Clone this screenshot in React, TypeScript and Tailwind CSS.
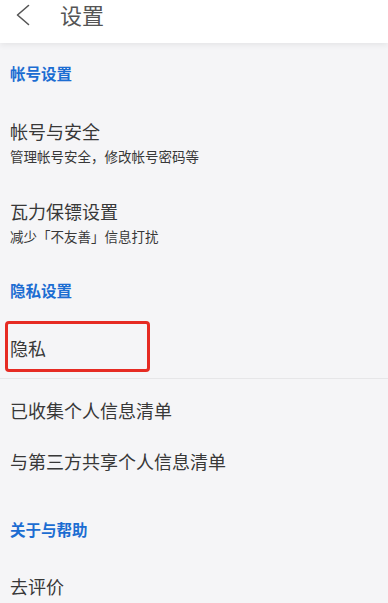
import React from 'react';

const font = { fontFamily: '"Noto Sans CJK SC", "Noto Sans", sans-serif' };

const SectionTitle: React.FC<{ title: string; className: string }> = ({ title, className }) => (
  <div className={`flex items-center px-[10px] ${className}`}>
    <span className="text-[15.5px] leading-[18px] font-bold text-[#1c6dd2]">{title}</span>
  </div>
);

const Row: React.FC<{ title: string; sub?: string; className: string; children?: React.ReactNode }> = ({
  title,
  sub,
  className,
  children,
}) => (
  <div className={`relative flex flex-col justify-center px-[10px] ${className}`}>
    <span className="text-[18px] leading-[22px] text-[#383838]">{title}</span>
    {sub && <span className="text-[13.5px] leading-[16px] mt-[6px] text-[#383838]">{sub}</span>}
    {children}
  </div>
);

const App: React.FC = () => {
  return (
    <div className="w-[388px] h-[603px] overflow-hidden bg-[#f5f5f7]" style={font}>
      <header className="relative z-10 h-[43px] bg-white shadow-[0_2px_6px_rgba(0,0,0,0.07)] flex items-start">
        <div className="w-[60px] h-[30px] flex items-center pl-[16px]">
          <svg width="14" height="22" viewBox="0 0 14 22" fill="none">
            <polyline points="12.5,1.5 1.5,11 12.5,20.5" stroke="#555" strokeWidth="1.6" strokeLinecap="round" strokeLinejoin="round" />
          </svg>
        </div>
        <h1 className="text-[22px] leading-[28px] text-[#555] font-normal">设置</h1>
      </header>

      <SectionTitle title="帐号设置" className="h-[60px]" />
      <Row title="帐号与安全" sub="管理帐号安全，修改帐号密码等" className="h-[80px] -mt-[1px]" />
      <Row title="瓦力保镖设置" sub="减少「不友善」信息打扰" className="h-[80px]" />

      <SectionTitle title="隐私设置" className="h-[56px]" />
      <Row title="隐私" className="h-[60px]">
        <div className="absolute left-[5px] top-[3px] w-[145px] h-[51px] border-[3px] border-[#e62b23] rounded-[4px]" />
      </Row>
      <div className="h-px bg-[#e6e6e8]" />
      <div className="h-[5px]" />
      <Row title="已收集个人信息清单" className="h-[52px]" />
      <Row title="与第三方共享个人信息清单" className="h-[52px] -mt-[1px]" />

      <SectionTitle title="关于与帮助" className="h-[84px]" />
      <Row title="去评价" className="h-[52px] -mt-[11px]" />
    </div>
  );
};

export default App;
